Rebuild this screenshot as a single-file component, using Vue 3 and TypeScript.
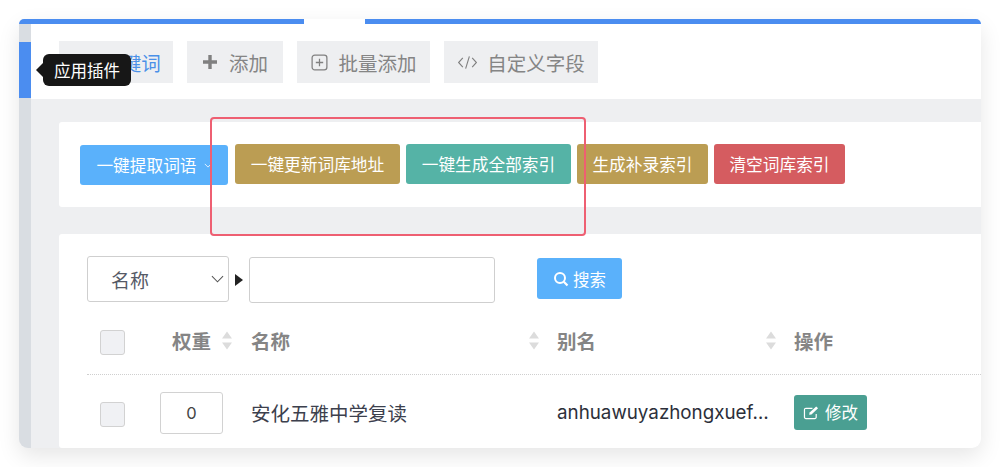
<script setup lang="ts">
const tabs = [
  { label: '添加', icon: 'plus', width: 96 },
  { label: '批量添加', icon: 'box', width: 133 },
  { label: '自定义字段', icon: 'code', width: 154 },
]
const actions = [
  { label: '一键更新词库地址', tone: 'gold', width: 165 },
  { label: '一键生成全部索引', tone: 'teal', width: 165 },
  { label: '生成补录索引', tone: 'gold', width: 131 },
  { label: '清空词库索引', tone: 'red', width: 131 },
]
const columns = [
  { label: '名称', width: 306 },
  { label: '别名', width: 237 },
]
</script>

<template>
  <div class="page">
    <div class="window">
      <div class="topbar">
        <span class="seg seg-a"></span>
        <span class="seg-gap"></span>
        <span class="seg seg-b"></span>
      </div>
      <div class="body">
        <aside class="rail"><span class="rail-active"></span></aside>
        <main class="main">
          <nav class="tabs">
            <button class="tab active">
              <svg class="tab-icon" viewBox="0 0 20 20"><path d="M3 3h9l5 5v9H3z" fill="#3f6fb5" /></svg>
              <span>关键词</span>
            </button>
            <button v-for="t in tabs" :key="t.label" class="tab" :style="{ width: t.width + 'px' }">
              <svg v-if="t.icon === 'plus'" class="tab-icon plus" viewBox="0 0 16 16"><path d="M8 1v14M1 8h14" stroke="#808080" stroke-width="3.4" fill="none" /></svg>
              <svg v-else-if="t.icon === 'box'" class="tab-icon" viewBox="0 0 18 18"><rect x="2" y="2" width="14" height="14" rx="2.5" stroke="#808080" stroke-width="1.2" fill="none" /><path d="M9 5.5v7M5.5 9h7" stroke="#808080" stroke-width="1.2" fill="none" /></svg>
              <svg v-else class="tab-icon code" viewBox="0 0 22 16"><path d="M6 3 1.5 8 6 13M16 3l4.500 5L16 13M13 1.500 9 14.500" stroke="#808080" stroke-width="1.200" fill="none" /></svg>
              <span>{{ t.label }}</span>
            </button>
          </nav>

          <section class="card actions">
            <button class="btn extract">一键提取词语 <svg class="mini-caret" viewBox="0 0 10 6"><path d="M1 1l4 4 4-4" stroke="#fff" stroke-width="1" fill="none" /></svg></button>
            <button v-for="a in actions" :key="a.label" class="btn" :class="a.tone" :style="{ width: a.width + 'px' }">{{ a.label }}</button>
          </section>

          <section class="card list">
            <div class="search">
              <div class="select">
                <span>名称</span>
                <svg class="caret" viewBox="0 0 14 8"><path d="M1 1l6 6 6-6" stroke="#555" stroke-width="1.100" fill="none" /></svg>
              </div>
              <span class="tri"></span>
              <div class="input"></div>
              <button class="search-btn">
                <svg class="search-icon" viewBox="0 0 16 16"><circle cx="7" cy="7" r="5" stroke="#fff" stroke-width="2" fill="none" /><path d="M10.800 10.800 14.500 14.500" stroke="#fff" stroke-width="2.200" /></svg>
                <span>搜索</span>
              </button>
            </div>

            <div class="thead">
              <span class="cell-check"><span class="check"></span></span>
              <span class="cell-weight">
                <b>权重</b>
                <svg class="sort" viewBox="0 0 12 20"><path d="M6 1l5 7H1z M6 19l5-7H1z" fill="#dcdcdc" /></svg>
              </span>
              <span v-for="c in columns" :key="c.label" class="cell-col" :style="{ width: c.width + 'px' }">
                <b>{{ c.label }}</b>
                <svg class="sort" viewBox="0 0 12 20"><path d="M6 1l5 7H1z M6 19l5-7H1z" fill="#dcdcdc" /></svg>
              </span>
              <span class="cell-op"><b>操作</b></span>
            </div>

            <div class="trow">
              <span class="cell-check"><span class="check"></span></span>
              <span class="cell-weight"><span class="num">0</span></span>
              <span class="cell-col name">安化五雅中学复读</span>
              <span class="cell-col alias">anhuawuyazhongxuef…</span>
              <span class="cell-op">
                <button class="edit">
                  <svg class="edit-icon" viewBox="0 0 18 16"><path d="M14 9.500V13a1.500 1.500 0 0 1-1.500 1.500H3A1.500 1.500 0 0 1 1.500 13V5A1.500 1.500 0 0 1 3 3.500h7" stroke="#fff" stroke-width="1.300" fill="none" /><path d="M6.500 10.500 7 8l7-6.500 2 2L9 10z" fill="#fff" /></svg>
                  <span>修改</span>
                </button>
              </span>
            </div>
          </section>
        </main>
      </div>

      <div class="tooltip">应用插件</div>
      <div class="annotation"></div>
    </div>
  </div>
</template>

<style scoped>
.page {
  width: 1000px;
  height: 467px;
  padding: 19px;
  box-sizing: border-box;
  background: #fff;
  overflow: hidden;
  font-family: Inter, "Noto Sans CJK SC", sans-serif;
}
.window {
  position: relative;
  width: 962px;
  height: 429px;
  border-radius: 9px;
  background: #eeeff1;
  box-shadow: 0 8px 22px rgba(0, 0, 0, 0.1);
  display: flex;
  flex-direction: column;
}
.topbar {
  display: flex;
  height: 5px;
  flex: none;
  background: #fff;
  border-radius: 9px 9px 0 0;
  overflow: hidden;
}
.seg { background: #4b8df0; display: block; }
.seg-a { width: 285px; }
.seg-gap { width: 61px; background: #fff; }
.seg-b { flex: 1; }
.body {
  display: flex;
  flex: 1;
  min-height: 0;
  border-radius: 0 0 9px 9px;
  overflow: hidden;
}
.rail {
  flex: none;
  width: 12px;
  background: #d9dde2;
  padding-top: 18px;
}
.rail-active {
  display: block;
  height: 56px;
  background: #4b8df0;
}
.main {
  flex: 1;
  min-width: 0;
  display: flex;
  flex-direction: column;
}
.tabs {
  flex: none;
  height: 75px;
  background: #fff;
  padding: 17px 28px 0;
  box-sizing: border-box;
  display: flex;
  gap: 14px;
  align-items: flex-start;
}
button {
  font-family: inherit;
  border: 0;
  padding: 0;
  margin: 0;
}
.tab {
  width: 114px;
  height: 42px;
  background: #eeeff1;
  color: #858585;
  font-size: 19.500px;
  display: flex;
  align-items: center;
  justify-content: center;
  gap: 9px;
}
.tab.active { color: #4a90e8; gap: 7px; padding-left: 5px; }
.tab-icon { width: 19px; height: 19px; flex: none; }
.tab-icon.plus { width: 16px; height: 16px; margin-right: 2px; }
.tab-icon.code { width: 21px; height: 15px; }
.card {
  background: #fff;
  margin-left: 28px;
  border-radius: 3px 0 0 3px;
}
.actions {
  flex: none;
  margin-top: 23px;
  height: 85px;
  padding: 22px 0 0 21px;
  box-sizing: border-box;
  display: flex;
  gap: 6px;
  align-items: flex-start;
}
.btn {
  height: 40px;
  border-radius: 3px;
  color: #fff;
  font-size: 16.700px;
  display: flex;
  align-items: center;
  justify-content: center;
}
.extract {
  width: 148px;
  background: #5ab1fb;
  margin: 1px 1px 0 0;
  gap: 7px;
}
.mini-caret { width: 8px; height: 5px; }
.gold { background: #bb9d53; }
.teal { background: #55b3a6; }
.red { background: #d55c60; }
.list {
  flex: 1;
  margin-top: 27px;
  min-height: 0;
}
.search {
  display: flex;
  align-items: flex-start;
  padding: 22px 0 0 28px;
}
.select {
  width: 142px;
  height: 46px;
  box-sizing: border-box;
  border: 1px solid #cfcfcf;
  border-radius: 3px;
  display: flex;
  align-items: center;
  justify-content: space-between;
  padding: 0 4px 0 23px;
  font-size: 19px;
  color: #565a66;
}
.caret { width: 13px; height: 8px; }
.tri {
  width: 0;
  height: 0;
  margin: 18px 6px 0 6px;
  border-left: 8px solid #222;
  border-top: 6px solid transparent;
  border-bottom: 6px solid transparent;
}
.input {
  width: 246px;
  height: 46px;
  box-sizing: border-box;
  border: 1px solid #cfcfcf;
  border-radius: 3px;
  margin-top: 1px;
}
.search-btn {
  margin: 2px 0 0 42px;
  width: 85px;
  height: 41px;
  background: #5ab1fb;
  border-radius: 3px;
  color: #fff;
  font-size: 16.500px;
  display: flex;
  align-items: center;
  justify-content: center;
  gap: 4px;
}
.search-icon { width: 16px; height: 16px; }
.thead, .trow {
  display: flex;
  align-items: center;
  margin-left: 28px;
}
.thead {
  height: 72px;
  padding-top: 4px;
  border-bottom: 1px dotted #cfcfcf;
  box-sizing: border-box;
  color: #858585;
  font-size: 19.500px;
}
.thead b { font-weight: 700; }
.trow { height: 74px; }
.cell-check {
  width: 73px;
  flex: none;
  padding-left: 13px;
  box-sizing: border-box;
  display: flex;
}
.check {
  width: 25px;
  height: 25px;
  margin-top: 4px;
  box-sizing: border-box;
  background: #f0f1f4;
  border: 1px solid #d2d2d2;
  border-radius: 3px;
}
.cell-weight {
  width: 91px;
  flex: none;
  display: flex;
  align-items: center;
  padding-left: 12px;
  box-sizing: border-box;
  gap: 10px;
}
.sort { width: 12px; height: 21px; flex: none; }
.cell-col {
  flex: none;
  box-sizing: border-box;
  display: flex;
  align-items: center;
  justify-content: space-between;
  padding-right: 17px;
}
.cell-op { flex: none; }
.num {
  width: 63px;
  height: 42px;
  margin-top: 2px;
  box-sizing: border-box;
  border: 1px solid #d2d2d2;
  border-radius: 3px;
  display: flex;
  align-items: center;
  justify-content: center;
  font-size: 16.500px;
  color: #444;
}
.trow .cell-weight { padding-left: 0; }
.name {
  width: 306px;
  font-size: 19.500px;
  color: #3c404d;
}
.alias {
  width: 237px;
  font-size: 18.800px;
  color: #2c2f3a;
  padding-right: 0;
  white-space: nowrap;
}
.edit {
  width: 73px;
  height: 35px;
  background: #4a9f92;
  border-radius: 3px;
  color: #fff;
  font-size: 16.500px;
  display: flex;
  align-items: center;
  justify-content: center;
  gap: 5px;
}
.edit-icon { width: 17px; height: 15px; }
.tooltip {
  position: absolute;
  left: 24px;
  top: 35px;
  width: 88px;
  height: 32px;
  background: #171717;
  border-radius: 6px;
  color: #fff;
  font-size: 16.500px;
  display: flex;
  align-items: center;
  justify-content: center;
}
.tooltip::before {
  content: "";
  position: absolute;
  left: -7px;
  top: 9px;
  border-right: 7px solid #171717;
  border-top: 7px solid transparent;
  border-bottom: 7px solid transparent;
}
.annotation {
  position: absolute;
  left: 191px;
  top: 98px;
  width: 376px;
  height: 119px;
  box-sizing: border-box;
  border: 2.500px solid #ee5f72;
  border-radius: 4px;
  pointer-events: none;
}
</style>
